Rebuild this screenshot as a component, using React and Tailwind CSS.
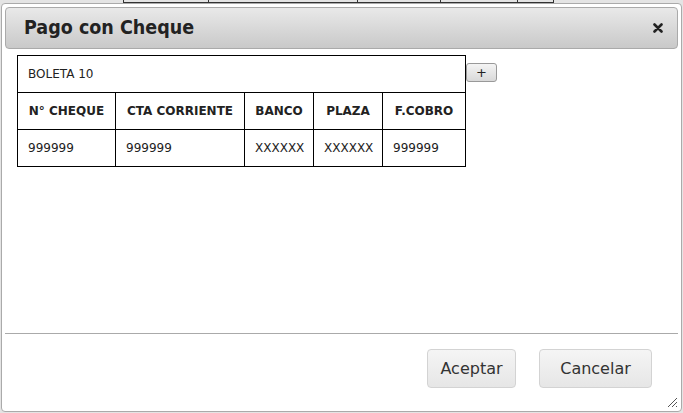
import React from "react";

const cols = [
  { label: "N° CHEQUE", w: "w-[97px]", value: "999999" },
  { label: "CTA CORRIENTE", w: "w-[129px]", value: "999999" },
  { label: "BANCO", w: "w-[69px]", value: "XXXXXX" },
  { label: "PLAZA", w: "w-[69px]", value: "XXXXXX" },
  { label: "F.COBRO", w: "w-[83px]", value: "999999" },
];

const bgCols = [85, 149, 83, 77, 37];

export default function App() {
  return (
    <div className="relative w-[683px] h-[413px] overflow-hidden bg-[#e4e4e4] font-['DejaVu_Sans',Verdana,sans-serif] text-[#222]">
      {/* page content behind the dialog */}
      <div className="absolute left-[123px] -top-[10px] flex border-b border-[#333]">
        {bgCols.map((w, i) => (
          <div key={i} className="h-[12px] border-l border-[#333] last:border-r" style={{ width: w }} />
        ))}
      </div>

      {/* dialog */}
      <div className="absolute left-[1px] top-[3px] w-[681px] h-[409px] flex flex-col bg-white border border-[#aaa] rounded-[4px] p-[3px]">
        <div className="h-[42px] shrink-0 flex items-center justify-between pl-[18px] pr-[14px] border border-[#aaa] rounded-[4px] bg-gradient-to-b from-[#e9e9e9] to-[#c9c9c9]">
          <span className="font-['DejaVu_Sans_Condensed','DejaVu_Sans',sans-serif] font-bold text-[19.5px] text-[#222] [font-stretch:condensed]">
            Pago con Cheque
          </span>
          <svg width="10" height="10" viewBox="0 0 10 10">
            <path d="M1.5 1.5 L8.5 8.5 M8.5 1.5 L1.5 8.5" stroke="#222" strokeWidth="2.6" strokeLinecap="round" />
          </svg>
        </div>

        <div className="flex-1 flex items-start pl-[12px] pt-[6px]">
          <div className="border border-black text-[12px]">
            <div className="h-[37px] flex items-center pl-[10px] border-b border-black text-[#222]">BOLETA 10</div>
            <div className="flex h-[37px] border-b border-black">
              {cols.map((c, i) => (
                <div
                  key={c.label}
                  className={`${c.w} flex items-center justify-center font-bold ${i > 0 ? "border-l border-black" : ""}`}
                >
                  {c.label}
                </div>
              ))}
            </div>
            <div className="flex h-[36px]">
              {cols.map((c, i) => (
                <div
                  key={c.label}
                  className={`${c.w} flex items-center pl-[10px] ${i > 0 ? "border-l border-black" : ""}`}
                >
                  {c.value}
                </div>
              ))}
            </div>
          </div>
          <button className="mt-[8px] w-[31px] h-[19px] flex items-center justify-center text-[13px] leading-none text-[#222] border border-[#999] rounded-[3px] bg-gradient-to-b from-[#f4f4f4] to-[#d9d9d9]">
            +
          </button>
        </div>

        <div className="h-[75px] shrink-0 border-t border-[#aaa] flex items-start justify-end gap-[23px] pt-[15px] pr-[26px] relative">
          <button className="w-[89px] h-[39px] text-[16px] text-[#333] border border-[#d3d3d3] rounded-[4px] bg-gradient-to-b from-[#f5f5f5] to-[#e6e6e6]">
            Aceptar
          </button>
          <button className="w-[113px] h-[39px] text-[16px] text-[#333] border border-[#d3d3d3] rounded-[4px] bg-gradient-to-b from-[#f5f5f5] to-[#e6e6e6]">
            Cancelar
          </button>
          <svg className="absolute right-0 bottom-0" width="12" height="12" viewBox="0 0 12 12">
            <path d="M11 2 L2 11 M11 6 L6 11 M11 10 L10 11" stroke="#555" strokeWidth="1" />
          </svg>
        </div>
      </div>
    </div>
  );
}
